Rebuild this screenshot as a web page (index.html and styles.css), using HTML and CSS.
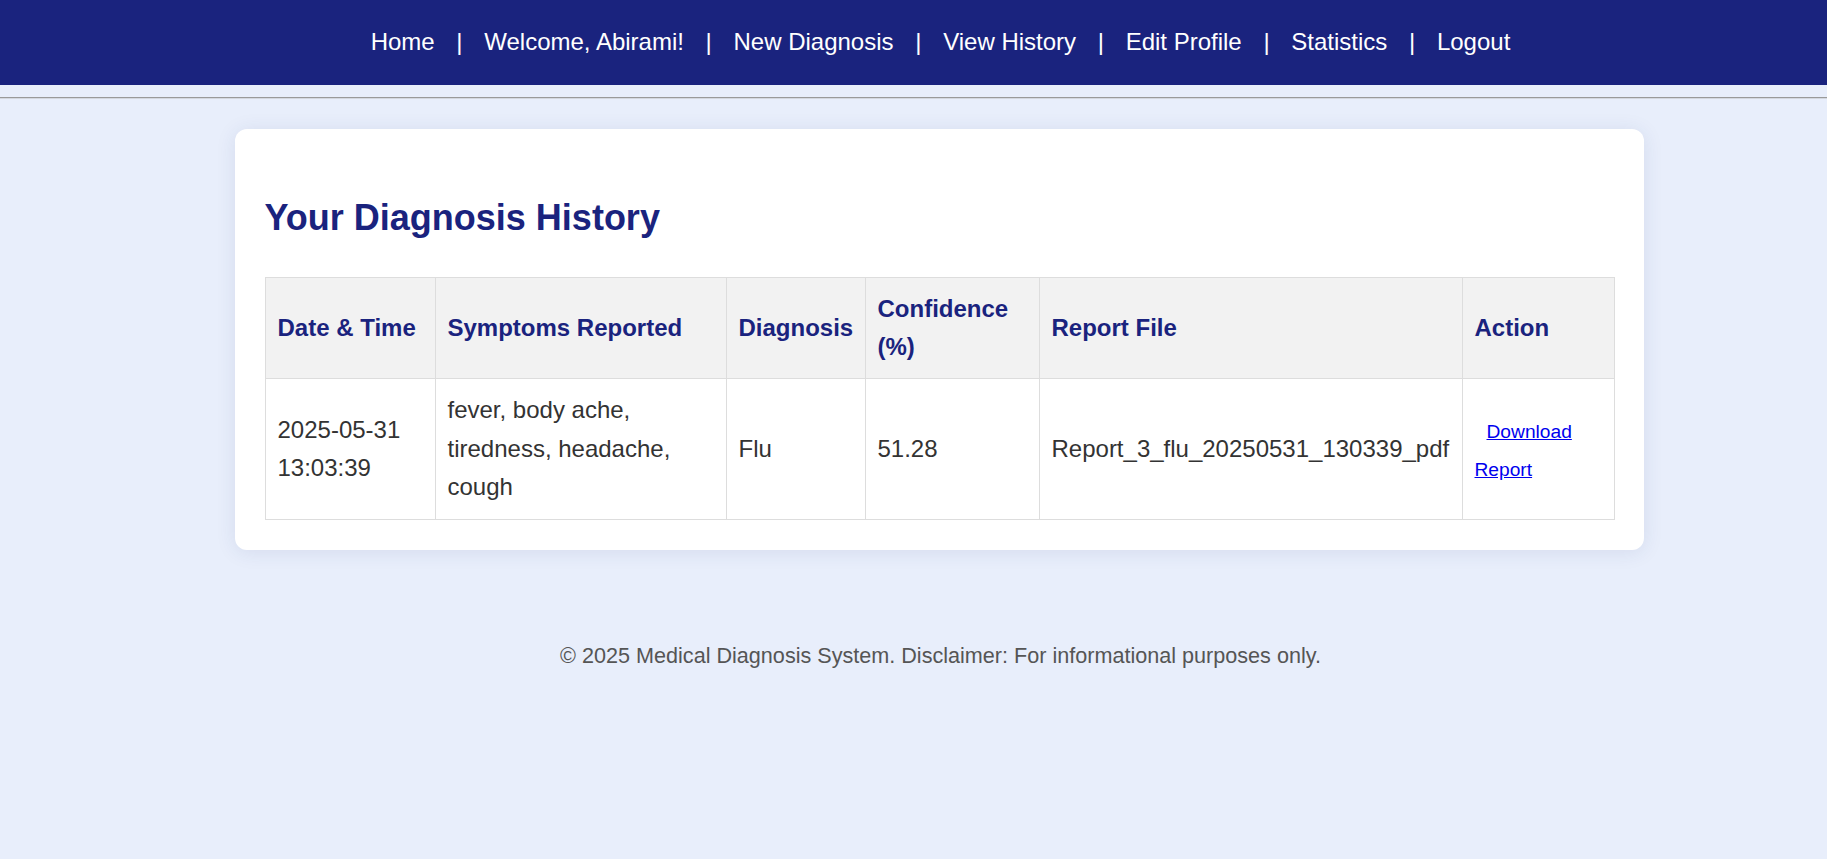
FILE: index.html
```html
<!DOCTYPE html>
<html lang="en">
<head>
<meta charset="utf-8">
<title>Your Diagnosis History</title>
<link rel="stylesheet" href="styles.css">
</head>
<body>
<nav class="topnav">
  <div class="nav-inner"><a class="nav-link" href="#">Home</a> | <span class="nav-link">Welcome, Abirami!</span> | <a class="nav-link" href="#">New Diagnosis</a> | <a class="nav-link" href="#">View History</a> | <a class="nav-link" href="#">Edit Profile</a> | <a class="nav-link" href="#">Statistics</a> | <a class="nav-link" href="#">Logout</a></div>
</nav>
<div class="rule"></div>
<main class="main">
  <section class="card">
    <h2 class="title">Your Diagnosis History</h2>
    <table class="history">
      <colgroup>
        <col class="c-date">
        <col class="c-sym">
        <col class="c-diag">
        <col class="c-conf">
        <col class="c-file">
        <col class="c-act">
      </colgroup>
      <thead>
        <tr>
          <th>Date &amp; Time</th>
          <th>Symptoms Reported</th>
          <th>Diagnosis</th>
          <th>Confidence (%)</th>
          <th>Report File</th>
          <th>Action</th>
        </tr>
      </thead>
      <tbody>
        <tr>
          <td>2025-05-31 13:03:39</td>
          <td>fever, body ache, tiredness, headache, cough</td>
          <td>Flu</td>
          <td>51.28</td>
          <td>Report_3_flu_20250531_130339_pdf</td>
          <td><a class="dl-link" href="#">Download Report</a></td>
        </tr>
      </tbody>
    </table>
  </section>
</main>
<footer class="footer">© 2025 Medical Diagnosis System. Disclaimer: For informational purposes only.</footer>
</body>
</html>
```
FILE: styles.css
```css
html, body {
  margin: 0;
  padding: 0;
}
body {
  background: #e8eefb;
  font-family: "Liberation Sans", Arial, sans-serif;
  font-size: 24px;
  line-height: 1.6;
  color: #333;
  min-height: 100vh;
}
.topnav {
  background: #1a237e;
  color: #fff;
  padding: 22px 0 24px 54px;
  line-height: 39px;
  text-align: center;
  white-space: nowrap;
}
.nav-link {
  color: #fff;
  text-decoration: none;
  margin: 0 15px;
}
.rule {
  margin-top: 12px;
  height: 0;
  border-top: 1px solid #9a9a9a;
  border-bottom: 1px solid #d4d8e0;
}
.main {
  padding: 30px 0 0 51px;
}
.card {
  box-sizing: border-box;
  width: 1409px;
  margin: 0 auto;
  padding: 30px;
  background: #fff;
  border-radius: 12px;
  box-shadow: 0 2px 20px rgba(40, 60, 120, 0.10);
}
.title {
  margin: 30px 0;
  font-size: 36px;
  line-height: 1.6;
  font-weight: bold;
  color: #1a237e;
}
.history {
  width: 100%;
  border-collapse: collapse;
  table-layout: fixed;
}
.c-date { width: 170px; }
.c-sym { width: 291px; }
.c-diag { width: 139px; }
.c-conf { width: 174px; }
.c-file { width: 423px; }
.c-act { width: 152px; }
.history th,
.history td {
  border: 1px solid #ddd;
  padding: 12px;
  text-align: left;
  vertical-align: middle;
}
.history th {
  background: #f2f2f2;
  color: #1a237e;
  font-weight: bold;
}
.history td {
  color: #333;
  white-space: normal;
}
.dl-link {
  color: #0000ee;
  text-decoration: underline;
  font-size: 19.2px;
  padding: 0 12px;
}
.footer {
  padding: 89px 0 0 54px;
  text-align: center;
  font-size: 21.6px;
  color: #555;
}
```
